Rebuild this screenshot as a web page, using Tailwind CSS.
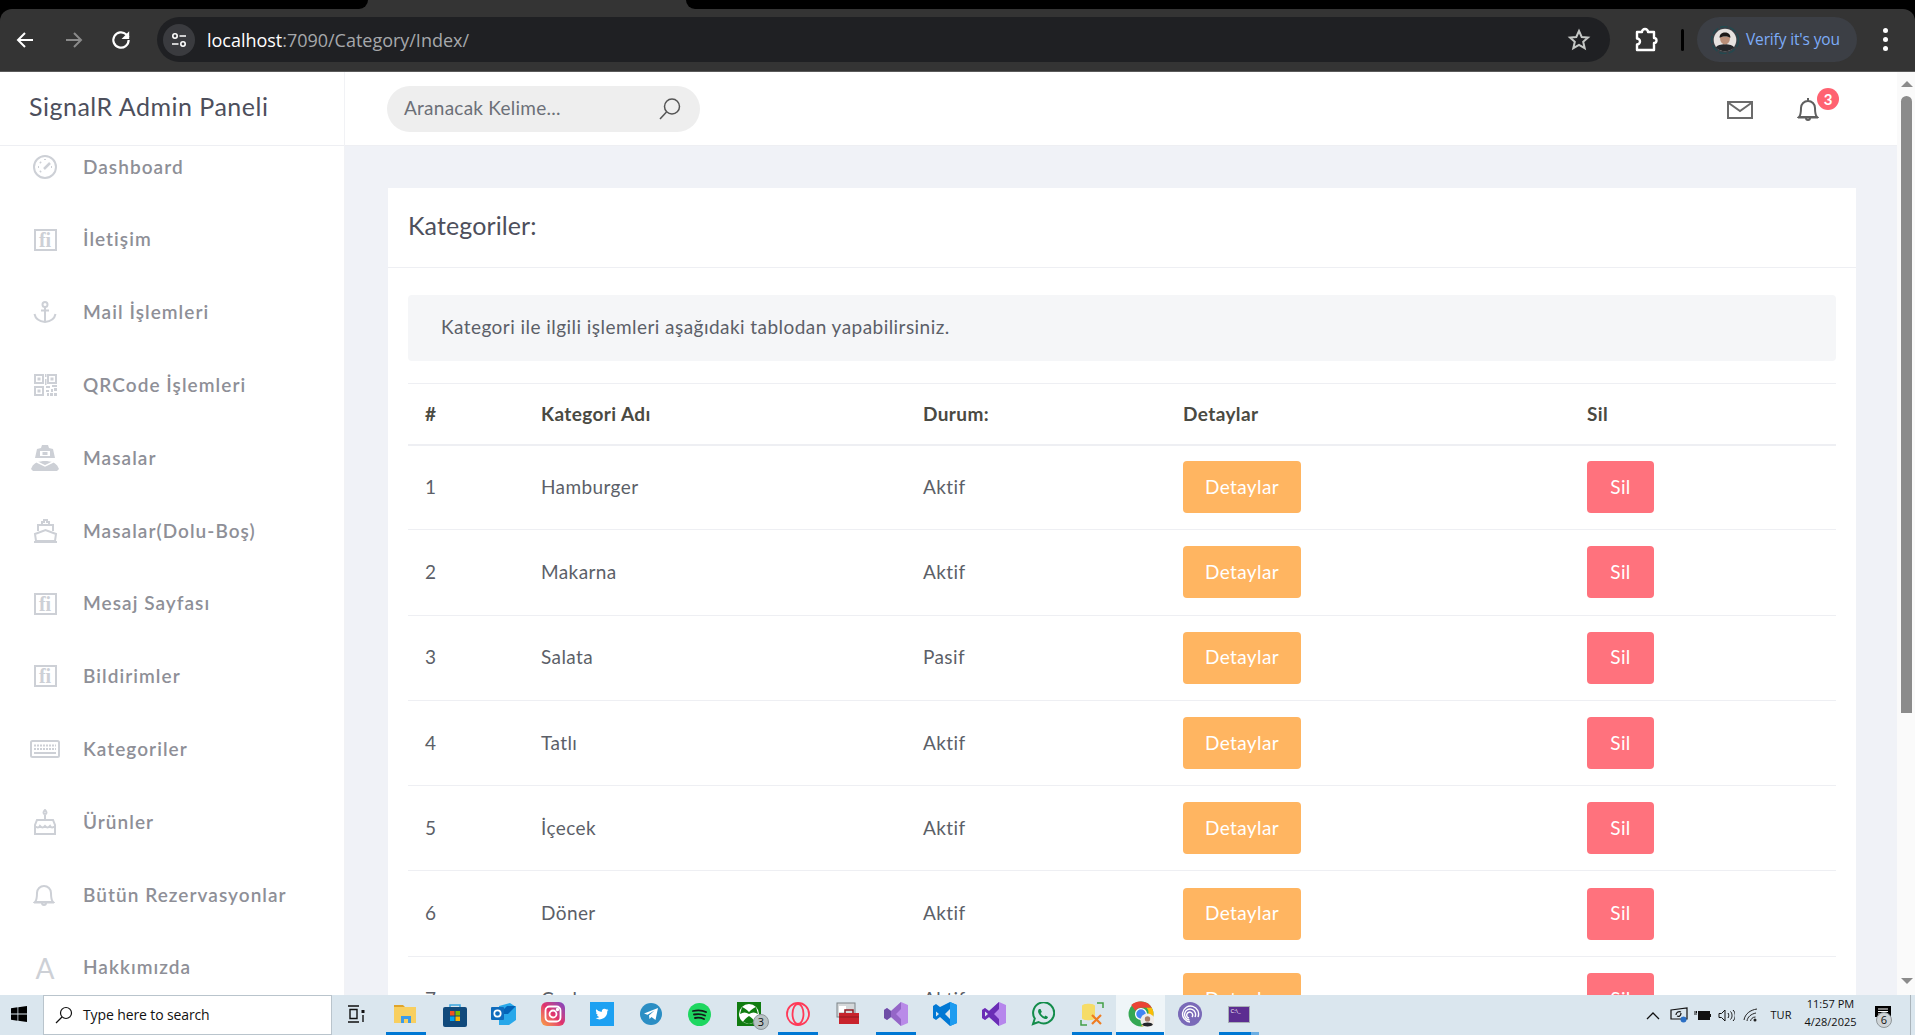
<!DOCTYPE html>
<html lang="tr">
<head>
  <meta charset="UTF-8" />
  <meta name="viewport" content="width=device-width, initial-scale=1.0" />
  <title>SignalR Admin Paneli</title>
  <script src="https://cdn.jsdelivr.net/npm/@tailwindcss/browser@4"></script>
</head>
<body class="h-[1035px] w-[1915px] overflow-hidden flex flex-col bg-black font-['Lato',sans-serif]">

  <!-- browser: tab strip -->
  <div class="h-[9px] flex bg-[#343434] shrink-0">
    <div class="w-[368px] bg-black rounded-br-[10px]"></div>
    <div class="w-[318px]"></div>
    <div class="flex-1 bg-black rounded-bl-[10px]"></div>
  </div>

  <!-- browser: toolbar -->
  <div class="h-[63px] shrink-0 bg-[#343434] rounded-t-[12px] border-b border-[#5a5a5a] flex items-center pb-[1px] font-['Open_Sans',sans-serif]">
    <div class="w-[157px] flex items-center pl-[14px] gap-[23px]">
      <svg class="w-[22px] h-[22px]" viewBox="0 0 22 22" fill="none" stroke="#fff" stroke-width="2"><path d="M19 11H4M11 4l-7 7 7 7"/></svg>
      <svg class="w-[22px] h-[22px] ml-[4px]" viewBox="0 0 22 22" fill="none" stroke="#8a8a8a" stroke-width="2"><path d="M3 11h15M11 4l7 7-7 7"/></svg>
      <svg class="w-[24px] h-[24px] ml-[1px]" viewBox="0 0 22 22" fill="none" stroke="#fff" stroke-width="2"><path d="M18 11a7 7 0 1 1-2.100-5L18 8.500"/><path d="M18.500 3v7h-7z" fill="#fff" stroke="none"/></svg>
    </div>
    <div class="w-[1453px] h-[45px] rounded-full bg-[#1f2023] flex items-center pl-[6px] pr-[20px]">
      <span class="w-[32px] h-[32px] rounded-full bg-[#3a3b3f] flex items-center justify-center">
        <svg class="w-[18px] h-[18px]" viewBox="0 0 18 18" fill="none" stroke="#fff" stroke-width="1.600"><circle cx="5" cy="5" r="2.200"/><path d="M9.500 5H16M2 13h6.500"/><circle cx="13" cy="13" r="2.200"/></svg>
      </span>
      <span class="ml-[12px] pt-[1px] text-[18px] tracking-[-0.02px] text-white">localhost<span class="text-[#a6a8ab]">:7090/Category/Index/</span></span>
      <svg class="w-[24px] h-[24px] ml-auto mr-[-1px]" viewBox="0 0 24 24" fill="none" stroke="#c4c7c5" stroke-width="2"><path d="M12 3l2.700 6 6.300.6-4.800 4.200 1.500 6.400L12 16.800l-5.700 3.400 1.500-6.400L3 9.600 9.300 9z"/></svg>
    </div>
    <svg class="w-[26px] h-[26px] ml-[23px]" viewBox="0 0 26 26" fill="none" stroke="#fff" stroke-width="2.400" stroke-linejoin="round"><path d="M4 5h5a3 3 0 0 1 6 0h6v6a2.500 2.500 0 0 1 0 5v7H4v-5.500a3 3 0 0 0 0-6z"/></svg>
    <span class="w-[3px] h-[22px] bg-black rounded ml-[22px]"></span>
    <div class="ml-[13px] w-[160px] h-[45px] rounded-full bg-[#3c3f45] flex items-center pl-[14px]">
      <svg class="w-[28px] h-[28px] shrink-0" viewBox="0 0 26 26"><circle cx="13" cy="13" r="12.500" fill="none" stroke="#23494f" stroke-width="1.500" stroke-dasharray="7 2"/><circle cx="13" cy="13" r="10.500" fill="#e6e2df"/><path d="M4.500 20c2-4 15-4 17 0-4 4.500-13 4.500-17 0z" fill="#26282b"/><path d="M8.500 12a4.500 5 0 0 0 9 0v-2h-9z" fill="#b98f78"/><path d="M8 11c-.5-6.500 10.500-6.500 10 0-2.500-1.800-7-1.800-10 0z" fill="#1d1a18"/></svg>
      <span class="ml-[7px] text-[15.500px] tracking-[-0.15px] text-[#7cacf8] whitespace-nowrap">Verify it's you</span>
    </div>
    <div class="ml-[26px] flex flex-col gap-[4px]">
      <span class="w-[5px] h-[5px] rounded-full bg-white"></span>
      <span class="w-[5px] h-[5px] rounded-full bg-white"></span>
      <span class="w-[5px] h-[5px] rounded-full bg-white"></span>
    </div>
  </div>

  <!-- page -->
  <div class="flex-1 min-h-0 flex bg-white overflow-hidden">

    <!-- sidebar -->
    <aside class="w-[345px] shrink-0 flex flex-col overflow-hidden border-r border-[#f1f2f5]">
      <div class="relative z-10 h-[74px] shrink-0 bg-white border-b border-[#eeeff3] flex items-center pl-[29px] pb-[3px] text-[25px] tracking-[0.5px] text-[#4d4f5c]">SignalR Admin Paneli</div>
      <ul class="mt-[-15.500px] text-[19px] font-semibold tracking-[1.05px] text-[#8e8f97]">
        <li class="h-[72.800px] flex items-center pl-[28px]">
          <span class="w-[34px] flex justify-center mr-[21px]">
            <svg class="w-[24px] h-[24px]" viewBox="0 0 24 24" fill="none" stroke="#cdd0d6" stroke-width="2"><circle cx="12" cy="12" r="11"/><path d="M11 14l6-6" stroke-width="2.500"/><path d="M12 4v1M5 12h1M18 12h1M7 7l1 1M7 17l1-1" stroke-dasharray="1.500 1"/></svg>
          </span>Dashboard
        </li>
        <li class="h-[72.800px] flex items-center pl-[28px]">
          <span class="w-[34px] flex justify-center mr-[21px]"><span class="w-[23px] h-[22px] border-2 border-[#cdd0d6] text-[#cdd0d6] font-['Liberation_Serif',serif] font-bold text-[20px] leading-[18px] tracking-normal text-center">fi</span></span>İletişim
        </li>
        <li class="h-[72.800px] flex items-center pl-[28px]">
          <span class="w-[34px] flex justify-center mr-[21px]">
            <svg class="w-[24px] h-[24px]" viewBox="0 0 24 24" fill="none" stroke="#cdd0d6" stroke-width="2"><circle cx="12" cy="4.500" r="2.500"/><path d="M12 7v15M8 10.500h8M1.500 14c1 5 6 7.500 10.500 8 4.500-.5 9.500-3 10.500-8"/></svg>
          </span>Mail İşlemleri
        </li>
        <li class="h-[72.800px] flex items-center pl-[28px]">
          <span class="w-[34px] flex justify-center mr-[21px]">
            <svg class="w-[23px] h-[22px]" viewBox="0 0 23 22" fill="#cdd0d6"><path fill-rule="evenodd" d="M0 0h10v10H0zM2 2v6h6V2zM13 0h10v10H13zM15 2v6h6V2zM0 12h10v10H0zM2 14v6h6v-6z"/><path d="M3.500 3.500h3v3h-3zM16.500 3.500h3v3h-3zM3.500 15.500h3v3h-3zM11 0h1.500v3H11zM11 5h1.500v6H11zM12 12h4v2h-4zM18 11h5v2h-5zM12 16h3v2h-3zM13 19h2v3h-2zM17 15h2v3h-2zM20 14h3v3h-3zM16 19h3v3h-3zM20 19h3v3h-3z"/></svg>
          </span>QRCode İşlemleri
        </li>
        <li class="h-[72.800px] flex items-center pl-[28px]">
          <span class="w-[34px] flex justify-center mr-[21px]">
            <svg class="w-[28px] h-[26px]" viewBox="0 0 28 26" fill="#cdd0d6"><path d="M11 0h6l1 3 4 1 2 9H4l2-9 4-1z"/><path d="M1 22c3-8 23-8 26 0l1 2-2 2H2l-2-2z"/><path d="M6 17l8 4 8-4" fill="none" stroke="#fff" stroke-width="1.500"/><path d="M9 6h10v5H9z" fill="#fff"/><path d="M11.500 7h5v3h-5z"/></svg>
          </span>Masalar
        </li>
        <li class="h-[72.800px] flex items-center pl-[28px]">
          <span class="w-[34px] flex justify-center mr-[21px]">
            <svg class="w-[25px] h-[24px]" viewBox="0 0 25 24" fill="none" stroke="#cdd0d6" stroke-width="2"><path d="M9 6V3h2V1h3v2h2v3M5 12V6h15v6M2 15l10.500-4L23 15l-1 7H3zM1 23h23"/></svg>
          </span>Masalar(Dolu-Boş)
        </li>
        <li class="h-[72.800px] flex items-center pl-[28px]">
          <span class="w-[34px] flex justify-center mr-[21px]"><span class="w-[23px] h-[22px] border-2 border-[#cdd0d6] text-[#cdd0d6] font-['Liberation_Serif',serif] font-bold text-[20px] leading-[18px] tracking-normal text-center">fi</span></span>Mesaj Sayfası
        </li>
        <li class="h-[72.800px] flex items-center pl-[28px]">
          <span class="w-[34px] flex justify-center mr-[21px]"><span class="w-[23px] h-[22px] border-2 border-[#cdd0d6] text-[#cdd0d6] font-['Liberation_Serif',serif] font-bold text-[20px] leading-[18px] tracking-normal text-center">fi</span></span>Bildirimler
        </li>
        <li class="h-[72.800px] flex items-center pl-[28px]">
          <span class="w-[34px] flex justify-center mr-[21px]">
            <svg class="w-[30px] h-[18px]" viewBox="0 0 30 18" fill="none" stroke="#cdd0d6"><rect x="1" y="1" width="28" height="16" rx="1.500" stroke-width="2"/><path d="M4 5.500h22M4 9h22" stroke-width="2" stroke-dasharray="2 1"/><path d="M4 13h22" stroke-width="2"/></svg>
          </span>Kategoriler
        </li>
        <li class="h-[72.800px] flex items-center pl-[28px]">
          <span class="w-[34px] flex justify-center mr-[21px]">
            <svg class="w-[26px] h-[26px]" viewBox="0 0 26 26" fill="none" stroke="#cdd0d6" stroke-width="2"><path d="M13 1c-2 2-2 4 0 4s2-2 0-4zM13 6v5M5 11h16l2 5v9H3v-9zM3 17c2 2 4 2 5 0 2 2 3 2 5 0 2 2 3 2 5 0 1 2 3 2 5 0"/></svg>
          </span>Ürünler
        </li>
        <li class="h-[72.800px] flex items-center pl-[28px]">
          <span class="w-[34px] flex justify-center mr-[21px]">
            <svg class="w-[22px] h-[26px] mr-[2px]" viewBox="0 0 22 26" fill="none" stroke="#cdd0d6" stroke-width="2"><path d="M2 20c2-2 2-4 2-9a7 7 0 0 1 14 0c0 5 0 7 2 9zM1 20.500h20M9 21a2 2 0 0 0 4 0"/></svg>
          </span>Bütün Rezervasyonlar
        </li>
        <li class="h-[72.800px] flex items-center pl-[28px]">
          <span class="w-[34px] flex justify-center mr-[21px] text-[#cdd0d6] text-[28px] font-normal tracking-normal">A</span>Hakkımızda
        </li>
      </ul>
    </aside>

    <!-- main -->
    <main class="flex-1 min-w-0 flex flex-col bg-[#f0f2f7] overflow-hidden">
      <header class="relative h-[74px] shrink-0 bg-white border-b border-[#eeeff3] flex items-center pl-[42px]">
        <div class="w-[313px] h-[46px] rounded-full bg-[#eeeeee] flex items-center pl-[17px] pr-[18px]">
          <span class="text-[19px] tracking-[0.25px] text-[#6c7078]">Aranacak Kelime...</span>
          <svg class="w-[24px] h-[24px] ml-auto" viewBox="0 0 24 24" fill="none" stroke="#555" stroke-width="1.500"><circle cx="14" cy="9.500" r="7.500"/><path d="M8.500 15L2 22"/></svg>
        </div>
        <svg class="w-[26px] h-[18px] ml-auto mr-[44px] mt-[3px]" viewBox="0 0 26 18" fill="none" stroke="#6b6b6b" stroke-width="2"><rect x="1" y="1" width="24" height="16"/><path d="M1 1.500L13 10 25 1.500"/></svg>
        <svg class="w-[22px] h-[25px] mr-[78px] mt-[2px]" viewBox="0 0 22 25" fill="none" stroke="#5f5f5f" stroke-width="2"><path d="M2 20c2-2 2-5 2-9a7 7 0 0 1 14 0c0 4 0 7 2 9zM1 20.500h20M9 21a2 2 0 0 0 4 0M11 1v3"/></svg>
        <span class="absolute left-[1472px] top-[16px] w-[22px] h-[22px] rounded-full bg-[#ff6271] text-white text-[15px] font-bold flex items-center justify-center">3</span>
      </header>

      <div class="pl-[43px] pr-[41px] pt-[42px]">
        <section class="bg-white">
          <div class="h-[80px] border-b border-[#eeeff3] flex items-center pl-[20px] pb-[3px] text-[25px] tracking-[0.1px] text-[#4d4f5c]">Kategoriler:</div>
          <div class="px-[20px] pt-[27px]">
            <div class="h-[66px] rounded-[4px] bg-[#f5f6f8] flex items-center pl-[33px] pb-[2px] text-[19px] tracking-[0.45px] text-[#5c5f68]">Kategori ile ilgili işlemleri aşağıdaki tablodan yapabilirsiniz.</div>
            <table class="mt-[22px] w-full table-fixed border-collapse text-[19px] tracking-[0.4px] text-[#5c5f68]">
              <colgroup>
                <col class="w-[133px]" />
                <col class="w-[382px]" />
                <col class="w-[260px]" />
                <col class="w-[404px]" />
                <col />
              </colgroup>
              <thead>
                <tr class="h-[61px] border-t border-[#eeeff3] border-b-2 border-b-[#eeeff3] text-left text-[#4a4a42]">
                  <th class="pl-[17px] font-bold">#</th>
                  <th class="font-bold">Kategori Adı</th>
                  <th class="font-bold">Durum:</th>
                  <th class="font-bold">Detaylar</th>
                  <th class="font-bold">Sil</th>
                </tr>
              </thead>
              <tbody>
                <tr class="h-[85.300px] border-b border-[#eeeff3]">
                  <td class="pl-[17px]">1</td><td>Hamburger</td><td>Aktif</td>
                  <td><button class="w-[118px] h-[52px] rounded-[4px] bg-[#ffb561] text-white">Detaylar</button></td>
                  <td><button class="w-[67px] h-[52px] rounded-[4px] bg-[#ff727d] text-white">Sil</button></td>
                </tr>
                <tr class="h-[85.300px] border-b border-[#eeeff3]">
                  <td class="pl-[17px]">2</td><td>Makarna</td><td>Aktif</td>
                  <td><button class="w-[118px] h-[52px] rounded-[4px] bg-[#ffb561] text-white">Detaylar</button></td>
                  <td><button class="w-[67px] h-[52px] rounded-[4px] bg-[#ff727d] text-white">Sil</button></td>
                </tr>
                <tr class="h-[85.300px] border-b border-[#eeeff3]">
                  <td class="pl-[17px]">3</td><td>Salata</td><td>Pasif</td>
                  <td><button class="w-[118px] h-[52px] rounded-[4px] bg-[#ffb561] text-white">Detaylar</button></td>
                  <td><button class="w-[67px] h-[52px] rounded-[4px] bg-[#ff727d] text-white">Sil</button></td>
                </tr>
                <tr class="h-[85.300px] border-b border-[#eeeff3]">
                  <td class="pl-[17px]">4</td><td>Tatlı</td><td>Aktif</td>
                  <td><button class="w-[118px] h-[52px] rounded-[4px] bg-[#ffb561] text-white">Detaylar</button></td>
                  <td><button class="w-[67px] h-[52px] rounded-[4px] bg-[#ff727d] text-white">Sil</button></td>
                </tr>
                <tr class="h-[85.300px] border-b border-[#eeeff3]">
                  <td class="pl-[17px]">5</td><td>İçecek</td><td>Aktif</td>
                  <td><button class="w-[118px] h-[52px] rounded-[4px] bg-[#ffb561] text-white">Detaylar</button></td>
                  <td><button class="w-[67px] h-[52px] rounded-[4px] bg-[#ff727d] text-white">Sil</button></td>
                </tr>
                <tr class="h-[85.300px] border-b border-[#eeeff3]">
                  <td class="pl-[17px]">6</td><td>Döner</td><td>Aktif</td>
                  <td><button class="w-[118px] h-[52px] rounded-[4px] bg-[#ffb561] text-white">Detaylar</button></td>
                  <td><button class="w-[67px] h-[52px] rounded-[4px] bg-[#ff727d] text-white">Sil</button></td>
                </tr>
                <tr class="h-[85.300px] border-b border-[#eeeff3]">
                  <td class="pl-[17px]">7</td><td>Çorba</td><td>Aktif</td>
                  <td><button class="w-[118px] h-[52px] rounded-[4px] bg-[#ffb561] text-white">Detaylar</button></td>
                  <td><button class="w-[67px] h-[52px] rounded-[4px] bg-[#ff727d] text-white">Sil</button></td>
                </tr>
              </tbody>
            </table>
          </div>
        </section>
      </div>
    </main>

    <!-- scrollbar -->
    <div class="w-[18px] shrink-0 bg-[#fafafa] flex flex-col items-center pt-[9px] pl-[1px]">
      <span class="w-0 h-0 border-x-[6px] border-x-transparent border-b-[6px] border-b-[#8b8b8b]"></span>
      <span class="w-[11px] h-[617px] mt-[9px] rounded-t-[6px] bg-[#8b8b8b]"></span>
      <span class="w-0 h-0 border-x-[6px] border-x-transparent border-t-[6px] border-t-[#8b8b8b] mt-[265px]"></span>
    </div>
  </div>

  <!-- windows taskbar -->
  <footer class="relative z-10 h-[40px] shrink-0 bg-[#dae6ee] flex items-stretch font-['Open_Sans',sans-serif] text-[#111]">
    <div class="w-[43px] flex items-center justify-center pr-[5px] pb-[2px]">
      <svg class="w-[16px] h-[16px]" viewBox="0 0 16 16" fill="#000"><path d="M0 2.200L6.500 1.300v6.300H0zM7.300 1.200L16 0v7.600H7.300zM0 8.400h6.500v6.300L0 13.800zM7.300 8.400H16V16l-8.700-1.200z"/></svg>
    </div>
    <div class="w-[289px] bg-white border border-[#b9c4cc] flex items-center pl-[11px] pb-[1px]">
      <svg class="w-[18px] h-[18px]" viewBox="0 0 18 18" fill="none" stroke="#111" stroke-width="1.200"><circle cx="11" cy="7" r="5.500"/><path d="M7 11l-6 6"/></svg>
      <span class="ml-[10px] text-[14px] tracking-[-0.12px]">Type here to search</span>
    </div>

    <div class="w-[49px] flex items-center justify-start pl-[15px] pb-[2px]">
      <svg class="w-[18px] h-[18px]" viewBox="0 0 18 18" fill="none" stroke="#111" stroke-width="1.400"><path d="M1 1h11M1 17h11M3 4.500h7v9H3z"/><rect x="14.500" y="5" width="3" height="3" fill="#111" stroke="none"/><path d="M16 10v7"/></svg>
    </div>
    <div class="relative w-[49px] flex items-center justify-center pb-[2px]">
      <svg class="w-[24px] h-[22px]" viewBox="0 0 24 22"><path d="M0 2h9l2 2h-11z" fill="#e0a42a"/><path d="M0 4h22v16H0z" fill="#f8cf5f"/><path d="M7 13h10v7H7z" fill="#3c9be8"/><path d="M10 16h4v4h-4z" fill="#f8cf5f"/></svg>
      <span class="absolute bottom-0 left-[5px] w-[40px] h-[3px] bg-[#0078d4]"></span>
    </div>
    <div class="w-[49px] flex items-center justify-center pb-[2px]">
      <svg class="w-[24px] h-[25px]" viewBox="0 0 24 25"><path d="M7 6V3h10v3" fill="none" stroke="#3ba7e0" stroke-width="1.500"/><rect y="5" width="24" height="20" rx="2" fill="#114a7c"/><rect x="7" y="9" width="4.500" height="4.500" fill="#f25022"/><rect x="12.500" y="9" width="4.500" height="4.500" fill="#7fba00"/><rect x="7" y="14.500" width="4.500" height="4.500" fill="#00a4ef"/><rect x="12.500" y="14.500" width="4.500" height="4.500" fill="#ffb900"/></svg>
    </div>
    <div class="w-[49px] flex items-center justify-center pb-[2px]">
      <svg class="w-[25px] h-[24px]" viewBox="0 0 25 24"><path d="M8 4l11-3 6 4v13l-7 5H8z" fill="#28a8ea"/><path d="M8 12l8-8h9l-8 8z" fill="#0364b8"/><rect y="5" width="13" height="13" rx="1" fill="#0f6cbd"/><circle cx="6.500" cy="11.500" r="3.200" fill="none" stroke="#fff" stroke-width="1.700"/></svg>
    </div>
    <div class="w-[49px] flex items-center justify-center pb-[2px]">
      <span class="w-[24px] h-[24px] rounded-[6px] bg-gradient-to-tr from-[#f9a13a] via-[#e1306c] to-[#7b3fc4] flex items-center justify-center">
        <svg class="w-[18px] h-[18px]" viewBox="0 0 18 18" fill="none" stroke="#fff" stroke-width="1.800"><rect x="1.500" y="1.500" width="15" height="15" rx="4"/><circle cx="9" cy="9" r="3.500"/><circle cx="13.500" cy="4.500" r=".8" fill="#fff"/></svg>
      </span>
    </div>
    <div class="w-[49px] flex items-center justify-center pb-[2px]">
      <span class="w-[24px] h-[24px] bg-[#1da1f2] flex items-center justify-center">
        <svg class="w-[14px] h-[14px]" viewBox="0 0 24 24" fill="#fff"><path d="M23 5c-.8.4-1.700.6-2.600.7.900-.6 1.600-1.400 2-2.500-.9.500-1.900.9-2.900 1.100A4.600 4.600 0 0 0 11.700 8.500 13 13 0 0 1 2.300 3.700a4.600 4.600 0 0 0 1.400 6.100c-.7 0-1.400-.2-2-.6 0 2.300 1.600 4.200 3.700 4.600-.7.200-1.400.2-2.100.1.600 1.900 2.300 3.200 4.300 3.200A9.300 9.300 0 0 1 1 19a13 13 0 0 0 20-11.600c.9-.6 1.600-1.400 2-2.400z"/></svg>
      </span>
    </div>
    <div class="w-[49px] flex items-center justify-center pb-[2px]">
      <span class="w-[22px] h-[22px] rounded-full bg-[#2b8ec4] flex items-center justify-center">
        <svg class="w-[14px] h-[14px]" viewBox="0 0 14 14" fill="#fff"><path d="M0 6.500L14 1l-2.500 12-4-3-2 2-.5-3.500 5.500-5-7 4.200z"/></svg>
      </span>
    </div>
    <div class="w-[49px] flex items-center justify-center pb-[2px]">
      <svg class="w-[23px] h-[23px]" viewBox="0 0 23 23" fill="none"><circle cx="11.500" cy="11.500" r="11.500" fill="#1ed760"/><path d="M5 8c4-1 9-1 13 1M6 11.500c4-.8 8-.5 11 1M7 15c3-.6 6-.4 9 1" stroke="#14191a" stroke-width="1.800" stroke-linecap="round"/></svg>
    </div>
    <div class="relative w-[49px] flex items-center justify-center pb-[2px]">
      <span class="w-[24px] h-[24px] bg-[#107c10] flex items-center justify-center">
        <svg class="w-[20px] h-[20px]" viewBox="0 0 20 20"><circle cx="10" cy="10" r="10" fill="#fff"/><path d="M3 3c3 1 5 3 7 5 2-2 4-4 7-5l2 7c-3-2-6-2-9 0-3-2-6-2-9 0zM10 12c3 2 5 4 6 6l-6 2-6-2c1-2 3-4 6-6z" fill="#107c10"/></svg>
      </span>
      <span class="absolute left-[29px] top-[19px] w-[16px] h-[16px] rounded-full bg-[#b8c2c4] border border-[#8d9599] text-[11px] leading-[14px] text-center">3</span>
    </div>
    <div class="relative w-[49px] flex items-center justify-center pb-[2px]">
      <svg class="w-[24px] h-[24px]" viewBox="0 0 24 24" fill="none" stroke="#ff3a58" stroke-width="1.800"><circle cx="12" cy="12" r="11"/><ellipse cx="12" cy="12" rx="5.500" ry="10"/></svg>
      <span class="absolute bottom-0 left-[5px] w-[40px] h-[3px] bg-[#0078d4]"></span>
    </div>
    <div class="w-[49px] flex items-center justify-center pb-[2px]">
      <svg class="w-[24px] h-[24px]" viewBox="0 0 24 24"><rect x="2" y="1" width="18" height="14" fill="#d4d8da" stroke="#7d8488"/><rect x="4" y="4" width="7" height="6" fill="#fff"/><path d="M4 11h20v11H4z" fill="#c8232c"/><path d="M10 11V8h8v3" fill="none" stroke="#8f1a20" stroke-width="1.500"/><path d="M4 15h20" stroke="#8f1a20"/></svg>
    </div>
    <div class="relative w-[49px] flex items-center justify-center pb-[2px]">
      <svg class="w-[24px] h-[24px]" viewBox="0 0 24 24"><path d="M17 0l7 3v18l-7 3-10-9-4 3-3-2V8l3-2 4 3z" fill="#b98be8"/><path d="M7 9l10-9v7l-5 5 5 5v7L7 15z" fill="#7c4fb0" opacity=".6"/><path d="M0 8l3-2 4 3v6l-4 3-3-2z" fill="#6d4da6"/></svg>
      <span class="absolute bottom-0 left-[5px] w-[40px] h-[3px] bg-[#0078d4]"></span>
    </div>
    <div class="w-[49px] flex items-center justify-center pb-[2px]">
      <svg class="w-[24px] h-[24px]" viewBox="0 0 24 24"><path d="M17 0l7 3v18l-7 3-10-9-4 3-3-2v-12l3-2 4 3z" fill="#0078d4"/><path d="M17 0l7 3v18l-7 3z" fill="#1e9cf0"/><path d="M17 7l-5 5 5 5z" fill="#dae6ee"/><path d="M3 9.500v5l3-2.500z" fill="#dae6ee"/></svg>
    </div>
    <div class="w-[49px] flex items-center justify-center pb-[2px]">
      <svg class="w-[24px] h-[24px]" viewBox="0 0 24 24"><path d="M17 0l7 3v18l-7 3-10-9-4 3-3-2V8l3-2 4 3z" fill="#b686ec"/><path d="M7 9l10-9v7l-5 5 5 5v7L7 15z" fill="#6a2db5"/><path d="M0 8l3-2 4 3v6l-4 3-3-2z" fill="#6a2db5"/><path d="M3 9.500v5l3-2.500z" fill="#dae6ee"/></svg>
    </div>
    <div class="w-[49px] flex items-center justify-center pb-[2px]">
      <svg class="w-[24px] h-[24px]" viewBox="0 0 24 24" fill="none"><path d="M2 22l1.800-5.500A10.500 10.500 0 1 1 7.500 20z" stroke="#128c4a" stroke-width="2"/><path d="M8 7c-1 1-1.500 2.500 0 5s4 4.500 6 5c1.500.3 2.800-.5 3-2l-2.500-1.500-1.200 1.200c-1.500-.5-3-2-3.600-3.600l1.200-1.200L9.500 7z" fill="#128c4a"/></svg>
    </div>
    <div class="relative w-[49px] flex items-center justify-center pb-[2px]">
      <svg class="w-[24px] h-[24px]" viewBox="0 0 24 24" fill="none"><path d="M2 4c0-3 13-3 13 0v12c0 3-13 3-13 0z" fill="#f6dc68"/><path d="M17 1h6v5M1 18v5h6" stroke="#43a047" stroke-width="1.500"/><path d="M12 13l9 9M21 13l-9 9" stroke="#ef7d22" stroke-width="2.200"/></svg>
      <span class="absolute bottom-0 left-[5px] w-[40px] h-[3px] bg-[#0078d4]"></span>
    </div>
    <div class="relative w-[49px] flex items-center justify-center bg-[#eff5f8] pb-[2px]">
      <svg class="w-[26px] h-[26px]" viewBox="0 0 24 24"><circle cx="12" cy="12" r="11.500" fill="#34a853"/><path d="M12 .5a11.500 11.500 0 0 1 10 5.800H12a5.700 5.700 0 0 0-5 2.900L3 3.800A11.500 11.500 0 0 1 12 .5z" fill="#ea4335"/><path d="M22 6.300a11.500 11.500 0 0 1-10 17.200l5-8.600a5.700 5.700 0 0 0 0-8.600z" fill="#fbbc05"/><circle cx="12" cy="12" r="5" fill="#4285f4" stroke="#fff" stroke-width="1.200"/><circle cx="18" cy="18" r="6.500" fill="#f0ece8"/><circle cx="18" cy="16.500" r="2.500" fill="#a87c66"/><path d="M13 22c1-3 9-3 10 0-2 2-8 2-10 0z" fill="#24262a"/></svg>
      <span class="absolute bottom-0 left-0 w-[48px] h-[3px] bg-[#0078d4]"></span>
    </div>
    <div class="w-[49px] flex items-center justify-center pb-[2px]">
      <svg class="w-[24px] h-[24px]" viewBox="0 0 24 24" fill="none"><circle cx="12" cy="12" r="12" fill="#7a6ab8"/><path d="M20 15a8 8 0 1 0-8 5M17 15a5.500 5.500 0 1 0-5.500 3M14 15a3 3 0 1 0-3 1" stroke="#fff" stroke-width="1.400"/></svg>
    </div>
    <div class="relative w-[49px] flex items-center justify-center pb-[2px]">
      <span class="w-[22px] h-[17px] bg-[#5c2d91] border border-[#a8b0b6] text-white text-[6px] leading-[8px] pl-[2px]">C:\_</span>
      <span class="absolute bottom-0 left-[5px] w-[32px] h-[3px] bg-[#0078d4]"></span>
      <span class="absolute bottom-0 left-[37px] w-[8px] h-[3px] bg-[#6aaee4]"></span>
    </div>

    <!-- tray -->
    <div class="flex-1 flex items-center justify-end">
      <svg class="w-[14px] h-[9px] mr-[10px]" viewBox="0 0 14 9" fill="none" stroke="#111" stroke-width="1.300"><path d="M1 8l6-6 6 6"/></svg>
      <svg class="w-[18px] h-[16px] mr-[6px]" viewBox="0 0 18 16" fill="none" stroke="#111" stroke-width="1.200"><path d="M1 3l16-2v11H1z"/><path d="M6 8c0-3 3-4 5-3M11 6c0 3-2 4-4 3"/><circle cx="13.500" cy="12.500" r="3" fill="#2a6fc4" stroke="none"/></svg>
      <svg class="w-[17px] h-[12px] mr-[7px]" viewBox="0 0 17 12"><path d="M0 5h3M1 2v2M2.500 2v2" stroke="#111" fill="none"/><rect x="4" y="2" width="12" height="9" fill="#111"/><rect x="16" y="5" width="1" height="3" fill="#111"/></svg>
      <svg class="w-[17px] h-[13px] mr-[8px]" viewBox="0 0 17 13" fill="none" stroke="#111"><path d="M1 4.500h2.500L7 1v11L3.500 8.500H1zM10 4c1 1.500 1 3.500 0 5M12.500 2.500c2 2 2 6 0 8M15 1c3 3 3 8 0 11"/></svg>
      <svg class="w-[15px] h-[14px] mr-[11px]" viewBox="0 0 15 14" fill="none" stroke="#222"><path d="M1 12C2 6 7 2 14 1M4 13c.5-4 4-7 9-8M7.500 13c.5-2 2-4 5-4"/><circle cx="12" cy="12" r="1.500" fill="#222" stroke="none"/></svg>
      <span class="w-[24px] text-[11px] mr-[10px] text-center">TUR</span>
      <div class="w-[55px] pb-[4px] text-center text-[11px] leading-[18px]">
        <div>11:57 PM</div>
        <div>4/28/2025</div>
      </div>
      <div class="relative w-[16px] h-[14px] ml-[17px] mr-[19px] mb-[5px]">
        <svg class="w-[16px] h-[15px]" viewBox="0 0 16 15"><path d="M0 0h16v11H6l-3 3v-3H0z" fill="#000"/><path d="M3 3h10M3 5.500h10M3 8h10" stroke="#fff"/></svg>
        <span class="absolute left-[1px] top-[6px] w-[16px] h-[16px] rounded-full bg-[#cfd5d8] border border-[#8f9699] text-[11px] leading-[14px] text-center">6</span>
      </div>
      <span class="w-px h-full bg-[#aab4bb] mr-[4px]"></span>
    </div>
  </footer>
</body>
</html>
